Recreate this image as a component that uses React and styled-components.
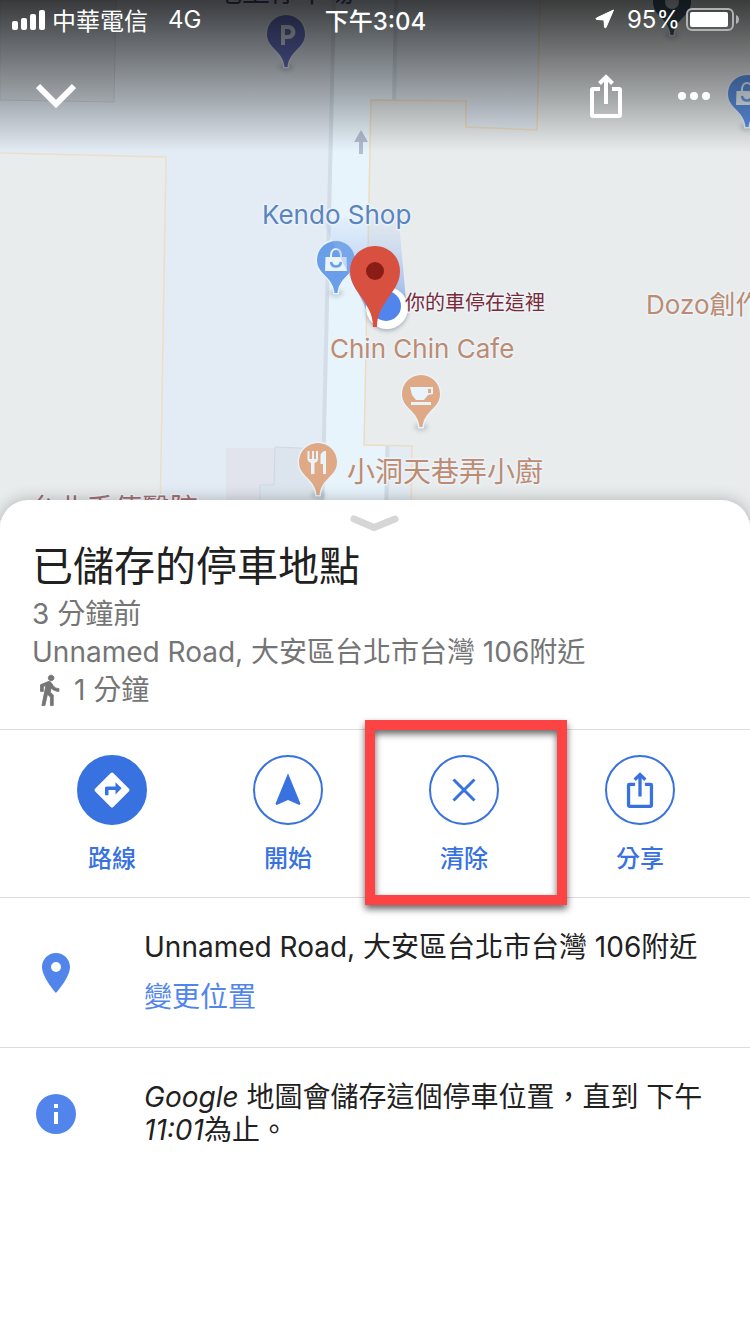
import React from 'react'
import styled, { createGlobalStyle } from 'styled-components'

const BLUE = '#3871e0'
const LIGHT_BLUE = '#5285ec'
const LINE = '#dcdcdc'

const PIN = 'M0 0C10.5 0 19 8.5 19 19C19 27 14 31.5 9.5 36C4.5 41 2 46 1.5 52H-1.5C-2 46 -4.5 41 -9.5 36C-14 31.5 -19 27 -19 19C-19 8.5 -10.5 0 0 0Z'

const actions = [
    { label: '路線', icon: 'directions', filled: true },
    { label: '開始', icon: 'navigate' },
    { label: '清除', icon: 'clear', highlighted: true },
    { label: '分享', icon: 'share' },
]

const MapPin = ({ x, y, color, children }) => (
    <g transform={`translate(${x} ${y})`}>
        <ellipse cx="0" cy="52" rx="7" ry="4" fill="#6b7785" opacity="0.3" filter="url(#soft)"/>
        <path d={PIN} fill={color} stroke="#e8f3fb" strokeWidth="3" paintOrder="stroke"/>
        {children}
    </g>
)

const BagGlyph = () => (
    <g>
        <path d="M-10.500 16H10.500L11 30H-11Z" fill="#e8f3fb"/>
        <path d="M-5 17V14C-4.500 6 4.500 6 5 14V17" fill="none" stroke="#e8f3fb" strokeWidth="2"/>
        <path d="M-5 21C-4 27 4 27 5 21" fill="none" stroke="#6a9ee8" strokeWidth="2.500"/>
    </g>
)

const CityMap = () => (
    <MapDrawing viewBox="0 0 750 520" preserveAspectRatio="xMidYMin slice">
        <defs>
            <filter id="soft" x="-50%" y="-50%" width="200%" height="200%">
                <feGaussianBlur stdDeviation="2"/>
            </filter>
            <linearGradient id="beam" x1="0" y1="1" x2="0" y2="0">
                <stop offset="0" stopColor="#6f9cee" stopOpacity="0.8"/>
                <stop offset="1" stopColor="#a9c4f0" stopOpacity="0.05"/>
            </linearGradient>
        </defs>

        <rect width="750" height="520" fill="#e3ebf4"/>
        <path d="M334 0H396L386 520H321Z" fill="#e8f4fc"/>
        <path d="M334 0L322 520M396 0L386 520" stroke="#d2dde7" strokeWidth="4" fill="none"/>

        <path d="M0 0H116L114 102L0 100Z" fill="#dde4ec" stroke="#cbd5de"/>
        <path d="M-2 153L166 157L160 520H-2Z" fill="#e8eced" stroke="#ecdfca" strokeWidth="1.5"/>
        <path d="M371 100L466 101V127L537 130L540 -2H752V520H411L412 446L364 445Z" fill="#e8eced" stroke="#ecdcc2" strokeWidth="1.5"/>
        <path d="M226 448H276V520H226Z" fill="#e1e3ed"/>
        <path d="M275 447L323 449L321 520H260V485H274Z" fill="#dce5ed" stroke="#cdd9e1"/>
        <path d="M361 130L368 142H363V154H359V142H354Z" fill="#b3bdd0"/>

        <MapLabel x="214" y="2" $color="#4a4f86" $size={28}>地上停車場</MapLabel>
        <MapLabel x="30" y="519" $color="#a86f76" $size={28}>台北手傳醫院</MapLabel>
        <MapLabel x="646" y="314" $color="#bd8b70">Dozo創作</MapLabel>

        <MapPin x={286} y={15} color="#6872c4">
            <path fillRule="evenodd" d="M-5 10H2C12 10 12 24 2 24H-1V30H-5ZM-1 14V20H2C6 20 6 14 2 14Z" fill="#e3ebf4"/>
        </MapPin>
        <MapPin x={672} y={-17} color="#46606f">
            <circle cx="0" cy="19" r="7" fill="#e3ebf4"/>
        </MapPin>
        <MapPin x={747} y={75} color="#5d92e4"><BagGlyph/></MapPin>
        <MapPin x={336} y={241} color="#6a9ee8"><BagGlyph/></MapPin>
        <MapPin x={421} y={375} color="#dfa985">
            <path fillRule="evenodd" d="M-11 12H12V19L7 20L3 25H-5L-9 20ZM7 14V18H10V14Z" fill="#e8f3fb"/>
            <path d="M-10 27H10V30H-10Z" fill="#e8f3fb"/>
        </MapPin>
        <MapPin x={318} y={443} color="#dfa985">
            <path d="M-10.500 8H-8.500V16H-6V8H-4V16H-2V8H0V16C0 18 -1 19 -3.500 20V31H-7V20C-9 19 -10.500 18 -10.500 16Z" fill="#e8f3fb"/>
            <path d="M8 8V31H5V21H2.500V13C2.500 10 5 8 8 8Z" fill="#e8f3fb"/>
        </MapPin>

        <path d="M370 317L322 220L398 212L406 300Z" fill="url(#beam)"/>
        <MapLabel x="262" y="224" $color="#5b84bf">Kendo Shop</MapLabel>
        <MapLabel x="330" y="358" $color="#bf8b70">Chin Chin Cafe</MapLabel>
        <MapLabel x="347" y="482" $color="#bf8b70" $size={28}>小洞天巷弄小廚</MapLabel>

        <circle cx="387" cy="310" r="21" fill="#4a5560" opacity="0.4" filter="url(#soft)"/>
        <circle cx="387" cy="308" r="21" fill="#fff"/>
        <circle cx="386" cy="306" r="15" fill="#5285ec"/>
        <MapLabel x="405" y="310" $color="#7b2a35" $size={20}>你的車停在這裡</MapLabel>
        <path d="M375 246C389 246 400 257 400 271C400 280 396 287 391 294C383 306 377 313 377 327H373C373 313 367 306 359 294C354 287 350 280 350 271C350 257 361 246 375 246Z" fill="#d85040"/>
        <circle cx="375" cy="271" r="9" fill="#8a1d16"/>
    </MapDrawing>
)

const ShareIcon = ({ size }) => (
    <svg width={size} height={size} viewBox="0 0 44 44" fill="none" stroke="currentColor" strokeWidth="4">
        <path d="M16 15H9C8 15 8 15 8 16V41C8 42 8 42 9 42H35C36 42 36 42 36 41V16C36 15 36 15 35 15H28" strokeLinejoin="round"/>
        <path d="M22 30V3M15.5 9.5L22 3L28.5 9.5"/>
    </svg>
)

const ActionIcon = ({ name }) => {
    if (name === 'directions') {
        return (
            <svg width="42" height="42" viewBox="0 0 24 24" fill="currentColor">
                <path d="M21.71 11.29l-9-9a1 1 0 0 0-1.41 0l-9 9a1 1 0 0 0 0 1.41l9 9c.39.39 1.02.39 1.41 0l9-9c.39-.38.39-1.01 0-1.41zM14 14.5V12h-4v3H8v-4c0-.55.45-1 1-1h5V7.5l3.5 3.5-3.5 3.5z"/>
            </svg>
        )
    }
    if (name === 'navigate') {
        return (
            <svg width="40" height="40" viewBox="0 0 24 24" fill="currentColor">
                <path d="M12 2L4.5 20.29l.71.71L12 18l6.79 3 .71-.71z"/>
            </svg>
        )
    }
    if (name === 'clear') {
        return (
            <svg width="24" height="24" viewBox="0 0 24 24" stroke="currentColor" strokeWidth="3">
                <path d="M1.5 1.5L22.5 22.5M22.5 1.5L1.5 22.5"/>
            </svg>
        )
    }
    return <ShareIcon size={36}/>
}

const App = () => {
    return (
        <Page>
            <GlobalStyle/>
            <MapSection>
                <CityMap/>
                <TopShade>
                    <StatusBar>
                        <StatusGroup>
                            <svg width="34" height="22" viewBox="0 0 34 22" fill="#fff">
                                <rect x="0" y="13" width="6" height="9" rx="2"/>
                                <rect x="9" y="10" width="6" height="12" rx="2"/>
                                <rect x="18" y="6" width="6" height="16" rx="2"/>
                                <rect x="27" y="2" width="6" height="20" rx="2"/>
                            </svg>
                            <span>中華電信</span>
                            <Network>4G</Network>
                        </StatusGroup>
                        <Clock>下午3:04</Clock>
                        <StatusGroup $end>
                            <svg width="20" height="20" viewBox="0 0 20 20" fill="#fff">
                                <path d="M18.5 1L11 18.5Q10 19.5 9.5 18L9 11L2 10.5Q0 10 1.5 9Z" stroke="#fff" strokeLinejoin="round"/>
                            </svg>
                            <Percent>95%</Percent>
                            <svg width="53" height="24" viewBox="0 0 53 24">
                                <rect x="1" y="2" width="46" height="21" rx="5" fill="none" stroke="#b0b1b2" strokeWidth="2"/>
                                <rect x="4" y="5" width="38" height="15" rx="2" fill="#fff"/>
                                <path d="M50 8Q53 9 53 12.5Q53 16 50 17Z" fill="#b0b1b2"/>
                            </svg>
                        </StatusGroup>
                    </StatusBar>
                    <Toolbar>
                        <IconButton aria-label="收合">
                            <svg width="40" height="26" viewBox="0 0 40 26" fill="none" stroke="#fff" strokeWidth="6">
                                <path d="M2 3L20 21L38 3"/>
                            </svg>
                        </IconButton>
                        <ToolbarEnd>
                            <IconButton aria-label="分享"><ShareIcon size={44}/></IconButton>
                            <IconButton aria-label="更多">
                                <svg width="32" height="8" viewBox="0 0 32 8" fill="#fff">
                                    <circle cx="4" cy="4" r="4"/>
                                    <circle cx="16" cy="4" r="4"/>
                                    <circle cx="28" cy="4" r="4"/>
                                </svg>
                            </IconButton>
                        </ToolbarEnd>
                    </Toolbar>
                </TopShade>
            </MapSection>

            <Sheet>
                <Handle aria-label="展開">
                    <svg width="50" height="18" viewBox="0 0 50 18" fill="none" stroke="#d6d6d6" strokeWidth="7" strokeLinecap="round" strokeLinejoin="round">
                        <path d="M4 4L24 12.5L45 4"/>
                    </svg>
                </Handle>
                <Summary>
                    <Title>已儲存的停車地點</Title>
                    <Detail>3 分鐘前</Detail>
                    <Detail>Unnamed Road, 大安區台北市台灣 106附近</Detail>
                    <Detail>
                        <WalkIcon width="34" height="34" viewBox="0 0 24 24">
                            <path d="M13.5 5.5c1.1 0 2-.9 2-2s-.9-2-2-2-2 .9-2 2 .9 2 2 2zM9.8 8.9L7 23h2.1l1.8-8 2.1 2v6h2v-7.5l-2.1-2 .6-3C14.8 12 16.8 13 19 13v-2c-1.9 0-3.5-1-4.3-2.4l-1-1.6c-.4-.6-1-1-1.7-1-.3 0-.5.1-.8.1L6 8.3V13h2V9.6l1.8-.7"/>
                        </WalkIcon>
                        1 分鐘
                    </Detail>
                </Summary>

                <Actions>
                    {actions.map((action) => (
                        <ActionCell key={action.label}>
                            <ActionButton>
                                <ActionCircle $filled={action.filled}>
                                    <ActionIcon name={action.icon}/>
                                </ActionCircle>
                                {action.label}
                            </ActionButton>
                            {action.highlighted && <Highlight/>}
                        </ActionCell>
                    ))}
                </Actions>

                <InfoRow>
                    <svg width="48" height="48" viewBox="0 0 24 24" fill={LIGHT_BLUE}>
                        <path d="M12 2C8.13 2 5 5.13 5 9c0 5.25 7 13 7 13s7-7.75 7-13c0-3.87-3.13-7-7-7zm0 9.5a2.5 2.5 0 0 1 0-5 2.5 2.5 0 0 1 0 5z"/>
                    </svg>
                    <InfoBody>
                        <InfoText>Unnamed Road, 大安區台北市台灣 106附近</InfoText>
                        <ChangeLink href="#">變更位置</ChangeLink>
                    </InfoBody>
                </InfoRow>
                <InfoRow>
                    <svg width="48" height="48" viewBox="0 0 24 24" fill={LIGHT_BLUE}>
                        <path d="M12 2a10 10 0 1 0 0 20 10 10 0 0 0 0-20zm1 15h-2v-6h2v6zm0-8h-2V7h2v2z"/>
                    </svg>
                    <InfoBody>
                        <InfoText><em>Google</em> 地圖會儲存這個停車位置，直到 下午 <em>11:01</em>為止。</InfoText>
                    </InfoBody>
                </InfoRow>
            </Sheet>
        </Page>
    )
}

const GlobalStyle = createGlobalStyle`
    * {
        box-sizing: border-box;
    }
    body {
        margin: 0;
        background: #fff;
        font-family: Inter, 'Noto Sans CJK TC', sans-serif;
        font-size: 28px;
    }
    button {
        border: 0;
        padding: 0;
        background: none;
        font: inherit;
        color: inherit;
        cursor: pointer;
    }
    svg {
        display: block;
        flex-shrink: 0;
    }
`

const Page = styled.div`
    display: flex;
    flex-direction: column;
    min-height: 100vh;
    overflow: hidden;
`

const MapSection = styled.header`
    position: relative;
    flex-shrink: 0;
    height: 520px;
    overflow: hidden;
`

const MapDrawing = styled.svg`
    position: absolute;
    inset: 0;
    width: 100%;
    height: 100%;
`

const MapLabel = styled.text`
    font-size: ${(props) => props.$size || 26}px;
    fill: ${(props) => props.$color};
    stroke: #ebf3f9;
    stroke-width: 3px;
    stroke-linejoin: round;
    paint-order: stroke;
`

const TopShade = styled.div`
    position: relative;
    height: 152px;
    color: #fff;
    background: linear-gradient(rgba(0, 0, 0, 0.75), rgba(0, 0, 0, 0.28) 66%, rgba(0, 0, 0, 0));
`

const StatusBar = styled.div`
    display: grid;
    grid-template-columns: 1fr auto 1fr;
    align-items: center;
    height: 40px;
    padding: 0 11px 2px 12px;
    font-size: 24px;
`

const StatusGroup = styled.div`
    display: flex;
    align-items: center;
    gap: 6px;
    justify-content: ${(props) => (props.$end ? 'flex-end' : 'flex-start')};
`

const Network = styled.span`
    margin-left: 14px;
`

const Percent = styled.span`
    margin-left: 6px;
`

const Clock = styled.span`
    font-weight: 500;
`

const Toolbar = styled.div`
    display: flex;
    align-items: center;
    justify-content: space-between;
    height: 112px;
    padding: 0 40px 0 36px;
`

const ToolbarEnd = styled.div`
    display: flex;
    align-items: center;
    gap: 50px;
`

const IconButton = styled.button`
    display: flex;
    align-items: center;
`

const Sheet = styled.main`
    position: relative;
    flex: 1;
    margin-top: -20px;
    border-radius: 28px 28px 0 0;
    background: #fff;
    box-shadow: 0 0 16px rgba(0, 0, 0, 0.25);
`

const Handle = styled.button`
    display: block;
    margin: 0 auto;
    padding-top: 15px;
`

const Summary = styled.section`
    padding: 4px 32px 20px;
`

const Title = styled.h1`
    margin: 0;
    font-size: 41px;
    font-weight: 400;
    line-height: 58px;
    color: #212121;
`

const Detail = styled.p`
    display: flex;
    align-items: center;
    gap: 8px;
    margin: 0;
    font-size: 28px;
    line-height: 38px;
    color: #757575;
`

const WalkIcon = styled.svg`
    fill: currentColor;
    stroke: currentColor;
    stroke-width: 0.6;
`

const Actions = styled.section`
    display: grid;
    grid-template-columns: repeat(4, 1fr);
    padding: 0 22px 0 24px;
    border-top: 1px solid ${LINE};
`

const ActionCell = styled.div`
    position: relative;
    display: flex;
    justify-content: center;
    padding: 25px 0 20px;
`

const ActionButton = styled.button`
    display: flex;
    flex-direction: column;
    align-items: center;
    gap: 16px;
    font-size: 24px;
    font-weight: 500;
    line-height: 36px;
    color: ${BLUE};
`

const ActionCircle = styled.span`
    display: flex;
    align-items: center;
    justify-content: center;
    width: 70px;
    height: 70px;
    border: 2px solid ${BLUE};
    border-radius: 50%;
    color: ${(props) => (props.$filled ? '#fff' : BLUE)};
    background: ${(props) => (props.$filled ? BLUE : 'transparent')};
`

const Highlight = styled.div`
    position: absolute;
    inset: -10px -15px -8px -11px;
    border: 10px solid #fd4343;
    box-shadow: 0 4px 7px rgba(0, 0, 0, 0.6), inset 0 4px 7px rgba(0, 0, 0, 0.6);
    pointer-events: none;
`

const InfoRow = styled.section`
    display: flex;
    align-items: center;
    gap: 64px;
    padding: 33px 32px;
    border-top: 1px solid ${LINE};
`

const InfoBody = styled.div`
    display: flex;
    flex-direction: column;
    gap: 17px;
    align-items: flex-start;
`

const InfoText = styled.p`
    margin: 0;
    font-size: 28px;
    line-height: 33px;
    color: #212121;
`

const ChangeLink = styled.a`
    font-size: 28px;
    line-height: 33px;
    color: ${LIGHT_BLUE};
    text-decoration: none;
`

export default App
